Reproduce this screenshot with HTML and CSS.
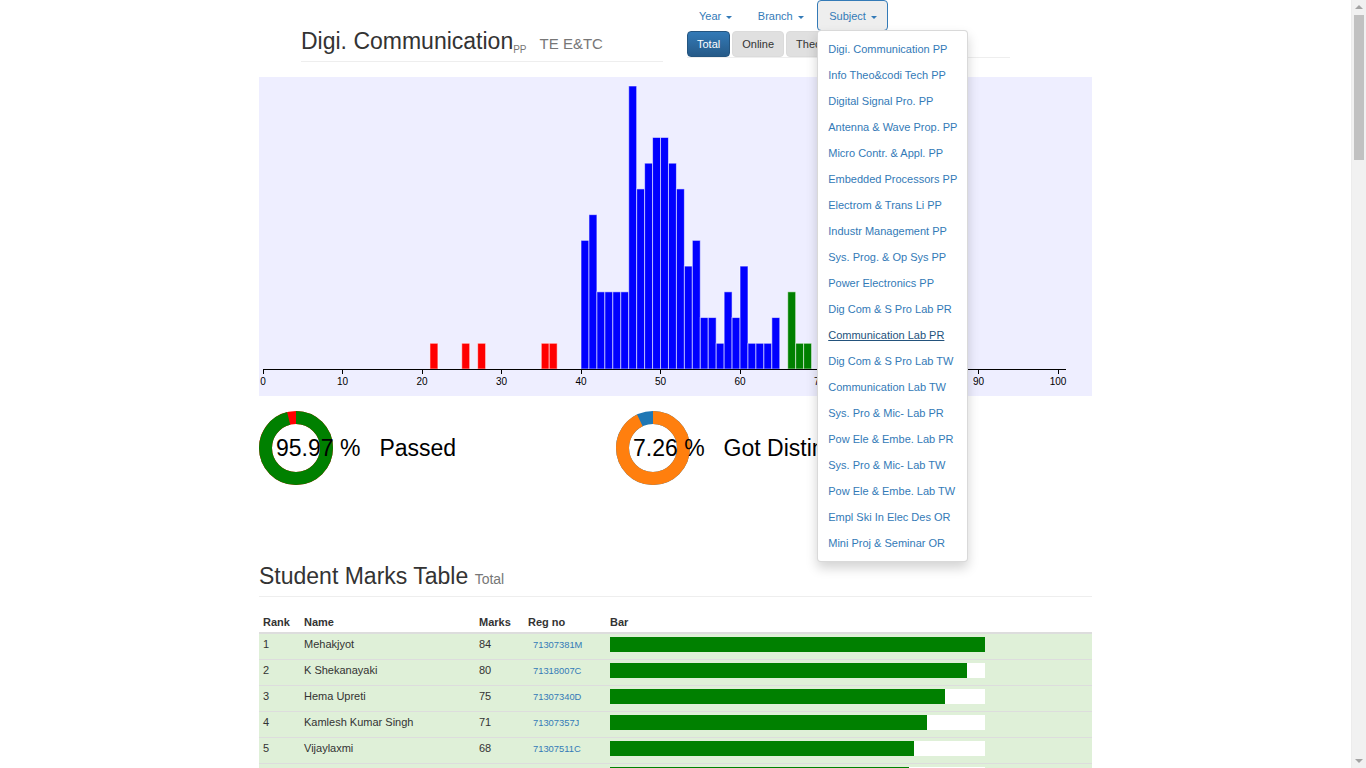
FILE: index.html
```html
<!DOCTYPE html>
<html lang="en">
<head>
<meta charset="utf-8">
<title>Digi. Communication - TE E&amp;TC</title>
<link rel="stylesheet" href="styles.css">
</head>
<body>
<div class="page">
  <header class="top">
    <div class="title-block">
      <span class="title">Digi. Communication<sub>PP</sub></span><span class="branch">TE E&amp;TC</span>
    </div>
    <div class="controls">
      <ul class="nav">
        <li><a href="#">Year <span class="caret"></span></a></li>
        <li><a href="#">Branch <span class="caret"></span></a></li>
        <li class="open"><a href="#">Subject <span class="caret"></span></a>
          <ul class="dropdown-menu">
            <li><a href="#">Digi. Communication PP</a></li>
            <li><a href="#">Info Theo&amp;codi Tech PP</a></li>
            <li><a href="#">Digital Signal Pro. PP</a></li>
            <li><a href="#">Antenna &amp; Wave Prop. PP</a></li>
            <li><a href="#">Micro Contr. &amp; Appl. PP</a></li>
            <li><a href="#">Embedded Processors PP</a></li>
            <li><a href="#">Electrom &amp; Trans Li PP</a></li>
            <li><a href="#">Industr Management PP</a></li>
            <li><a href="#">Sys. Prog. &amp; Op Sys PP</a></li>
            <li><a href="#">Power Electronics PP</a></li>
            <li><a href="#">Dig Com &amp; S Pro Lab PR</a></li>
            <li><a href="#" class="hover">Communication Lab PR</a></li>
            <li><a href="#">Dig Com &amp; S Pro Lab TW</a></li>
            <li><a href="#">Communication Lab TW</a></li>
            <li><a href="#">Sys. Pro &amp; Mic- Lab PR</a></li>
            <li><a href="#">Pow Ele &amp; Embe. Lab PR</a></li>
            <li><a href="#">Sys. Pro &amp; Mic- Lab TW</a></li>
            <li><a href="#">Pow Ele &amp; Embe. Lab TW</a></li>
            <li><a href="#">Empl Ski In Elec Des OR</a></li>
            <li><a href="#">Mini Proj &amp; Seminar OR</a></li>
          </ul>
        </li>
      </ul>
      <div class="btns">
        <a href="#" class="btn btn-primary">Total</a>
        <a href="#" class="btn btn-default">Online</a>
        <a href="#" class="btn btn-default">Theory</a>
        <a href="#" class="btn btn-outline">Practical / Oral</a>
      </div>
    </div>
  </header>

  <div class="chart"><svg id="hist" width="833" height="319"></svg></div>

  <div class="stats">
    <div class="stat">
      <svg class="donut" width="74" height="74" viewBox="0 0 74 74">
        <circle cx="37" cy="37" r="30.5" fill="none" stroke="#ff0000" stroke-width="13"/>
        <circle cx="37" cy="37" r="30.5" fill="none" stroke="#008000" stroke-width="13" stroke-dasharray="183.91 300" transform="rotate(-90 37 37)"/>
      </svg>
      <span class="stat-value">95.97 %</span><span class="stat-label">Passed</span>
    </div>
    <div class="stat">
      <svg class="donut" width="74" height="74" viewBox="0 0 74 74">
        <circle cx="37" cy="37" r="30.5" fill="none" stroke="#1f77b4" stroke-width="13"/>
        <circle cx="37" cy="37" r="30.5" fill="none" stroke="#ff7f0e" stroke-width="13" stroke-dasharray="177.73 300" transform="rotate(-90 37 37)"/>
      </svg>
      <span class="stat-value">7.26 %</span><span class="stat-label">Got Distinction</span>
    </div>
  </div>

  <h2 class="section-title">Student Marks Table <small>Total</small></h2>

  <table class="marks">
    <colgroup>
      <col class="c-rank"><col class="c-name"><col class="c-marks"><col class="c-reg"><col>
    </colgroup>
    <thead>
      <tr><th>Rank</th><th>Name</th><th>Marks</th><th>Reg no</th><th>Bar</th></tr>
    </thead>
    <tbody id="rows"></tbody>
  </table>
</div>

<div class="scrollbar" aria-hidden="true">
  <span class="sb-up"></span>
  <span class="sb-thumb"></span>
  <span class="sb-down"></span>
</div>
<script src="script.js"></script>
</body>
</html>
```

FILE: styles.css
```css
* { box-sizing: border-box; }
html, body { margin: 0; padding: 0; }
body {
  font-family: "Liberation Sans", Arial, Helvetica, sans-serif;
  font-size: 11px;
  line-height: 1.42857;
  color: #333;
  background: #fff;
  padding-right: 15px;
}
a { color: #337ab7; text-decoration: none; }

.page { width: 833px; margin: 0 auto 20px; }

/* header */
.top { display: flex; align-items: flex-start; padding-left: 42px; }
.title-block {
  width: 362px;
  padding-top: 28px;
  padding-bottom: 7px;
  font-size: 23px;
  line-height: 26px;
  border-bottom: 1px solid #eee;
  white-space: nowrap;
}
.title { color: #333; }
.title sub { font-size: 10px; color: #777; vertical-align: -4px; line-height: 0; }
.branch { font-size: 15px; line-height: 1; color: #777; margin-left: 13px; }

.controls { width: 323px; margin-left: 24px; border-bottom: 1px solid #eee; }
.nav { display: flex; list-style: none; margin: 0; padding: 0; height: 31px; }
.nav > li { position: relative; margin-right: 2px; }
.nav > li > a {
  display: block;
  padding: 8px 10.5px 7px 11px;
  line-height: 14px;
  border: 1px solid transparent;
  border-radius: 4px;
  white-space: nowrap;
}
.nav > li.open > a { background: #eee; border-color: #337ab7; }
.caret {
  display: inline-block;
  width: 0; height: 0;
  margin-left: 2px;
  vertical-align: middle;
  border-top: 3px solid;
  border-left: 3px solid transparent;
  border-right: 3px solid transparent;
}

.dropdown-menu {
  position: absolute;
  top: 100%;
  left: 0;
  z-index: 1000;
  margin: -1px 0 0;
  padding: 5px 0;
  list-style: none;
  background: #fff;
  border: 1px solid rgba(0,0,0,.15);
  border-radius: 4px;
  box-shadow: 0 6px 12px rgba(0,0,0,.175);
}
.dropdown-menu a {
  display: block;
  padding: 5px 10px;
  line-height: 16px;
  color: #337ab7;
  white-space: nowrap;
}
.dropdown-menu a.hover { color: #23527c; text-decoration: underline; }

.btns { display: flex; gap: 2px; height: 26px; }
.btn {
  display: block;
  padding: 5px 9px;
  line-height: 14px;
  font-size: 11px;
  border: 1px solid transparent;
  border-radius: 4px;
  white-space: nowrap;
}
.btn-primary {
  color: #fff;
  background: linear-gradient(#337ab7, #265a88);
  border-color: #245580;
}
.btn-default { color: #333; background: #e0e0e0; border-color: #dbdbdb; }
.btn-outline { color: #337ab7; background: #fff; border-color: #2e6da4; padding: 5px 12px; }

/* chart */
.chart { margin-top: 15px; height: 319px; background: #eeeeff; }
.chart svg { display: block; }
.axis text { font-family: "Liberation Sans", Arial, sans-serif; font-size: 10px; fill: #000; }

/* stats */
.stats { display: flex; margin-top: 15px; height: 74px; }
.stat { display: flex; align-items: center; width: 357px; white-space: nowrap; }
.donut { display: block; flex: none; }
.stat-value { font-size: 23px; color: #000; margin-left: -57px; }
.stat-label { font-size: 23px; color: #000; margin-left: 19px; }

/* table section */
.section-title {
  margin: 78px 0 0;
  padding-bottom: 7px;
  border-bottom: 1px solid #eee;
  font-size: 23px;
  line-height: 26px;
  font-weight: normal;
  color: #333;
}
.section-title small { font-size: 14px; color: #777; line-height: 1; }

.marks {
  width: 100%;
  table-layout: fixed;
  border-collapse: separate;
  border-spacing: 0;
  margin-top: 16px;
}
.c-rank { width: 41px; }
.c-name { width: 175px; }
.c-marks { width: 49px; }
.c-reg { width: 82px; }
.marks th {
  text-align: left;
  font-weight: bold;
  padding: 3px 4px 4px;
  line-height: 12px;
  border-bottom: 2px solid #ddd;
}
.marks td {
  padding: 3px 4px 7px;
  line-height: 15px;
  height: 26px;
  border-top: 1px solid #ddd;
  white-space: nowrap;
  overflow: hidden;
}
.marks tbody tr:first-child td { border-top: 0; height: 25px; }
.marks tr.success td { background: #dff0d8; }
.marks tr.danger td { background: #f2dede; }
.reg { font-size: 9.35px; line-height: 1; padding-left: 5px; color: #337ab7; }
.bar-track { display: block; width: 375px; height: 15px; background: #fff; }
.bar-fill { display: block; height: 15px; background: #008000; }

/* window scrollbar (drawn, since the page is scrolled content) */
.scrollbar {
  position: fixed;
  top: 0;
  right: 0;
  bottom: 0;
  width: 15px;
  background: #f1f1f1;
  border-left: 1px solid #ececec;
}
.sb-thumb {
  position: absolute;
  left: 2px;
  top: 15px;
  width: 10px;
  height: 145px;
  background: #c1c1c1;
}
.sb-up, .sb-down {
  position: absolute;
  left: 3px;
  width: 0; height: 0;
  border-left: 4px solid transparent;
  border-right: 4px solid transparent;
}
.sb-up { top: 5px; border-bottom: 4px solid #a3a3a3; }
.sb-down { bottom: 5px; border-top: 4px solid #a3a3a3; }
```

FILE: script.js
```js
(function () {
  var NS = "http://www.w3.org/2000/svg";
  var hist = [[21,1],[25,1],[27,1],[35,1],[36,1],[40,5],[41,6],[42,3],[43,3],[44,3],[45,3],
    [46,11],[47,7],[48,8],[49,9],[50,9],[51,8],[52,7],[53,4],[54,5],[55,2],[56,2],[57,1],
    [58,3],[59,2],[60,4],[61,1],[62,1],[63,1],[64,2],[66,3],[67,1],[68,1],[71,1],[75,1],[80,1],[84,1]];

  function el(name, attrs) {
    var e = document.createElementNS(NS, name);
    for (var k in attrs) e.setAttribute(k, attrs[k]);
    return e;
  }

  var svg = document.getElementById("hist");
  var g = el("g", { transform: "translate(4,0)" });
  svg.appendChild(g);
  var W = 803, base = 292, unit = 283 / 11, xs = W / 101;

  hist.forEach(function (d) {
    var m = d[0], c = d[1];
    var color = m < 40 ? "#ff0000" : (m >= 66 ? "#008000" : "#0000ff");
    g.appendChild(el("rect", {
      x: (m * xs).toFixed(2), y: (base - c * unit).toFixed(2),
      width: xs.toFixed(2), height: (c * unit).toFixed(2),
      fill: color, stroke: "rgba(255,255,255,0.55)", "stroke-width": 1
    }));
  });

  var axis = el("g", { "class": "axis" });
  g.appendChild(axis);
  axis.appendChild(el("path", { d: "M0," + base + "H" + W, stroke: "#000", fill: "none", "shape-rendering": "crispEdges" }));
  for (var t = 0; t <= 100; t += 10) {
    var x = t * xs;
    axis.appendChild(el("line", { x1: x, x2: x, y1: base, y2: base + 5, stroke: "#000", "shape-rendering": "crispEdges" }));
    var tx = el("text", { x: x, y: base + 9, dy: ".71em", "text-anchor": "middle" });
    tx.textContent = String(t);
    axis.appendChild(tx);
  }

  /* table */
  var marks = [];
  hist.slice().reverse().forEach(function (d) {
    for (var i = 0; i < d[1]; i++) marks.push(d[0]);
  });
  var known = [
    ["Mehakjyot", "71307381M"], ["K Shekanayaki", "71318007C"], ["Hema Upreti", "71307340D"],
    ["Kamlesh Kumar Singh", "71307357J"], ["Vijaylaxmi", "71307511C"]
  ];
  var first = ["Aarti","Rohit","Sneha","Pranav","Kiran","Amit","Pooja","Rahul","Neha","Sagar","Priya","Akash",
    "Shweta","Nikhil","Komal","Vishal","Anjali","Suresh","Deepak","Manisha","Tushar","Swati","Ganesh","Rupali"];
  var last = ["Patil","Sharma","Kulkarni","Deshmukh","Jadhav","Shinde","Pawar","Joshi","Gupta","More","Kale","Singh"];
  var letters = "ABCDEFGHJKLM";
  var tbody = document.getElementById("rows");
  var html = "";
  marks.forEach(function (m, i) {
    var name, reg;
    if (i < known.length) { name = known[i][0]; reg = known[i][1]; }
    else {
      name = first[(i * 7) % first.length] + " " + last[(i * 5) % last.length];
      reg = "713" + String(7000 + ((i * 137) % 900)).padStart(5, "0") + letters[(i * 3) % letters.length];
    }
    var cls = m >= 66 ? "success" : (m < 40 ? "danger" : "");
    var w = (m / 84 * 100).toFixed(2);
    html += '<tr class="' + cls + '"><td>' + (i + 1) + '</td><td>' + name + '</td><td>' + m +
      '</td><td><a href="#" class="reg">' + reg + '</a></td><td><span class="bar-track"><span class="bar-fill" style="width:' +
      w + '%"></span></span></td></tr>';
  });
  tbody.innerHTML = html;
})();
```
